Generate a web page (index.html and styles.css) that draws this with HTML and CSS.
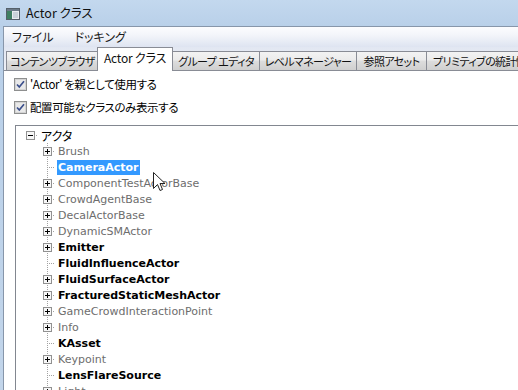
FILE: index.html
```html
<!DOCTYPE html>
<html lang="ja">
<head>
<meta charset="utf-8">
<title>Actor クラス</title>
<link rel="stylesheet" href="styles.css">
</head>
<body>
<div class="window">
  <div class="titlebar">
    <svg class="appicon" width="14" height="12" viewBox="0 0 14 12">
      <rect x="0.5" y="0.5" width="13" height="11" fill="#e8ecef" stroke="#55606a"/>
      <rect x="1" y="1" width="12" height="2" fill="#6b7a88"/>
      <rect x="1" y="3" width="5" height="8" fill="#3f7f62"/>
      <rect x="7" y="4" width="5" height="6" fill="#c9d2d9"/>
    </svg>
    <span class="title">Actor クラス</span>
  </div>
  <div class="client">
    <div class="menubar">
      <span class="menu">ファイル</span>
      <span class="menu">ドッキング</span>
    </div>
    <div class="tabbar">
      <div class="tab t1">コンテンツブラウザ</div>
      <div class="tab active t2">Actor クラス</div>
      <div class="tab t3">グループ エディタ</div>
      <div class="tab t4">レベルマネージャー</div>
      <div class="tab t5">参照アセット</div>
      <div class="tab t6">プリミティブの統計情報</div>
    </div>
    <div class="panel">
      <div class="check first">
        <svg class="cbox" width="13" height="13" viewBox="0 0 13 13">
          <rect x="0.5" y="0.5" width="12" height="12" fill="#f6f6f6" stroke="#8e8f8f"/>
          <rect x="1.5" y="1.5" width="10" height="10" fill="#e9e9e9" stroke="#d4d4d4"/>
          <path d="M3 6.5 L5.3 9 L10 3.3" fill="none" stroke="#3b4f8c" stroke-width="1.7"/>
        </svg>
        <span class="jp cl">'Actor' を親として使用する</span>
      </div>
      <div class="check second">
        <svg class="cbox" width="13" height="13" viewBox="0 0 13 13">
          <rect x="0.5" y="0.5" width="12" height="12" fill="#f6f6f6" stroke="#8e8f8f"/>
          <rect x="1.5" y="1.5" width="10" height="10" fill="#e9e9e9" stroke="#d4d4d4"/>
          <path d="M3 6.5 L5.3 9 L10 3.3" fill="none" stroke="#3b4f8c" stroke-width="1.7"/>
        </svg>
        <span class="jp cl">配置可能なクラスのみ表示する</span>
      </div>
      <div class="tree">
        <div class="row root">
          <span class="conn rootconn"><svg class="exp" width="9" height="9" viewBox="0 0 9 9"><rect x="0.5" y="0.5" width="8" height="8" fill="#f7f7f7" stroke="#919191"/><path d="M2 4.5h5" stroke="#000"/></svg></span>
          <span class="label jp">アクタ</span>
        </div>
        <div class="row child">
          <span class="conn"><svg class="exp" width="9" height="9" viewBox="0 0 9 9"><rect x="0.5" y="0.5" width="8" height="8" fill="#f7f7f7" stroke="#919191"/><path d="M2 4.5h5M4.5 2v5" stroke="#000"/></svg></span>
          <span class="label dim">Brush</span>
        </div>
        <div class="row child">
          <span class="conn leaf"></span>
          <span class="label strong selected">CameraActor</span>
        </div>
        <div class="row child">
          <span class="conn"><svg class="exp" width="9" height="9" viewBox="0 0 9 9"><rect x="0.5" y="0.5" width="8" height="8" fill="#f7f7f7" stroke="#919191"/><path d="M2 4.5h5M4.5 2v5" stroke="#000"/></svg></span>
          <span class="label dim">ComponentTestActorBase</span>
        </div>
        <div class="row child">
          <span class="conn"><svg class="exp" width="9" height="9" viewBox="0 0 9 9"><rect x="0.5" y="0.5" width="8" height="8" fill="#f7f7f7" stroke="#919191"/><path d="M2 4.5h5M4.5 2v5" stroke="#000"/></svg></span>
          <span class="label dim">CrowdAgentBase</span>
        </div>
        <div class="row child">
          <span class="conn"><svg class="exp" width="9" height="9" viewBox="0 0 9 9"><rect x="0.5" y="0.5" width="8" height="8" fill="#f7f7f7" stroke="#919191"/><path d="M2 4.5h5M4.5 2v5" stroke="#000"/></svg></span>
          <span class="label dim">DecalActorBase</span>
        </div>
        <div class="row child">
          <span class="conn"><svg class="exp" width="9" height="9" viewBox="0 0 9 9"><rect x="0.5" y="0.5" width="8" height="8" fill="#f7f7f7" stroke="#919191"/><path d="M2 4.5h5M4.5 2v5" stroke="#000"/></svg></span>
          <span class="label dim">DynamicSMActor</span>
        </div>
        <div class="row child">
          <span class="conn"><svg class="exp" width="9" height="9" viewBox="0 0 9 9"><rect x="0.5" y="0.5" width="8" height="8" fill="#f7f7f7" stroke="#919191"/><path d="M2 4.5h5M4.5 2v5" stroke="#000"/></svg></span>
          <span class="label strong">Emitter</span>
        </div>
        <div class="row child">
          <span class="conn leaf"></span>
          <span class="label strong">FluidInfluenceActor</span>
        </div>
        <div class="row child">
          <span class="conn"><svg class="exp" width="9" height="9" viewBox="0 0 9 9"><rect x="0.5" y="0.5" width="8" height="8" fill="#f7f7f7" stroke="#919191"/><path d="M2 4.5h5M4.5 2v5" stroke="#000"/></svg></span>
          <span class="label strong">FluidSurfaceActor</span>
        </div>
        <div class="row child">
          <span class="conn"><svg class="exp" width="9" height="9" viewBox="0 0 9 9"><rect x="0.5" y="0.5" width="8" height="8" fill="#f7f7f7" stroke="#919191"/><path d="M2 4.5h5M4.5 2v5" stroke="#000"/></svg></span>
          <span class="label strong">FracturedStaticMeshActor</span>
        </div>
        <div class="row child">
          <span class="conn"><svg class="exp" width="9" height="9" viewBox="0 0 9 9"><rect x="0.5" y="0.5" width="8" height="8" fill="#f7f7f7" stroke="#919191"/><path d="M2 4.5h5M4.5 2v5" stroke="#000"/></svg></span>
          <span class="label dim">GameCrowdInteractionPoint</span>
        </div>
        <div class="row child">
          <span class="conn"><svg class="exp" width="9" height="9" viewBox="0 0 9 9"><rect x="0.5" y="0.5" width="8" height="8" fill="#f7f7f7" stroke="#919191"/><path d="M2 4.5h5M4.5 2v5" stroke="#000"/></svg></span>
          <span class="label dim">Info</span>
        </div>
        <div class="row child">
          <span class="conn leaf"></span>
          <span class="label strong">KAsset</span>
        </div>
        <div class="row child">
          <span class="conn"><svg class="exp" width="9" height="9" viewBox="0 0 9 9"><rect x="0.5" y="0.5" width="8" height="8" fill="#f7f7f7" stroke="#919191"/><path d="M2 4.5h5M4.5 2v5" stroke="#000"/></svg></span>
          <span class="label dim">Keypoint</span>
        </div>
        <div class="row child">
          <span class="conn leaf"></span>
          <span class="label strong">LensFlareSource</span>
        </div>
        <div class="row child">
          <span class="conn"><svg class="exp" width="9" height="9" viewBox="0 0 9 9"><rect x="0.5" y="0.5" width="8" height="8" fill="#f7f7f7" stroke="#919191"/><path d="M2 4.5h5M4.5 2v5" stroke="#000"/></svg></span>
          <span class="label dim">Light</span>
        </div>
      </div>
    </div>
  </div>
  <svg class="cursor" width="13" height="21" viewBox="0 0 13 21">
    <path d="M0.5 0.5 L0.5 16.5 L4.5 12.5 L7 18.5 L9.5 17.5 L7 11.5 L12 11.5 Z" fill="#fff" stroke="#222" stroke-width="1" stroke-linejoin="miter"/>
  </svg>
</div>
</body>
</html>
```
FILE: styles.css
```css
html, body {
  margin: 0;
  padding: 0;
}
body {
  width: 518px;
  height: 390px;
  overflow: hidden;
  background: #c0d5eb;
  font-family: "Noto Sans CJK JP", "Noto Sans", sans-serif;
  font-size: 12px;
  color: #000;
}
.window {
  position: relative;
  width: 518px;
  height: 390px;
  display: flex;
  flex-direction: column;
  overflow: hidden;
  background: linear-gradient(to bottom, #c3d8ee 0, #b9d0e9 26px, #c2d5ea 100%);
}
.jp {
  font-family: "Noto Sans CJK JP", sans-serif;
  font-feature-settings: "palt";
}

/* title bar */
.titlebar {
  height: 26px;
  flex-shrink: 0;
  display: flex;
  align-items: center;
  padding-left: 6px;
  box-sizing: border-box;
}
.appicon {
  display: block;
  margin-top: 2px;
}
.title {
  margin-left: 6px;
  font-size: 12.5px;
  font-feature-settings: "palt";
  color: #111;
  line-height: 16px;
}

/* client area */
.client {
  flex: 1;
  margin-left: 3px;
  border-left: 1px solid #8796aa;
  border-top: 1px solid #8796aa;
  background: #fff;
  display: flex;
  flex-direction: column;
  min-height: 0;
  overflow: hidden;
}
.menubar {
  height: 20px;
  flex-shrink: 0;
  display: flex;
  align-items: center;
  gap: 21px;
  padding-left: 8px;
  background: linear-gradient(to bottom, #fcfcfe 0, #f3f5fa 40%, #dee4f1 100%);
  font-feature-settings: "palt";
}
.menu {
  line-height: 16px;
  color: #1a1a1a;
}

/* tabs */
.tabbar {
  height: 23px;
  flex-shrink: 0;
  display: flex;
  align-items: flex-end;
  padding-left: 2px;
  background: linear-gradient(to bottom, #e2e7f2 0, #eef0f6 100%);
  font-feature-settings: "palt";
  font-size: 11px;
  letter-spacing: -0.6px;
}
.tab {
  box-sizing: border-box;
  height: 19px;
  border: 1px solid #898c95;
  border-bottom: none;
  border-right: none;
  background: linear-gradient(to bottom, #f3f3f3 0, #ebebeb 45%, #dddddd 50%, #cfcfcf 100%);
  display: flex;
  align-items: center;
  justify-content: center;
  white-space: nowrap;
  line-height: 14px;
  color: #111;
  flex-shrink: 0;
  overflow: hidden;
}
.tab.active {
  position: relative;
  z-index: 1;
  height: 24px;
  margin-bottom: -1px;
  margin-left: -1px;
  margin-right: -1px;
  border-right: 1px solid #898c95;
  background: #fff;
  padding-bottom: 4px;
  font-size: 12px;
  letter-spacing: -0.2px;
}
.t1 { width: 92px; }
.t2 { width: 76px; }
.t3 { width: 87px; }
.t4 { width: 97px; }
.t5 { width: 70px; }
.t6 { width: 94px; justify-content: flex-start; padding-left: 6px; }

/* panel */
.panel {
  flex: 1;
  border-top: 1px solid #898c95;
  padding-left: 10px;
  min-height: 0;
  overflow: hidden;
}
.check {
  height: 18px;
  display: flex;
  align-items: center;
  gap: 3px;
}
.check.first { margin-top: 4px; }
.check.second { margin-top: 5px; }
.cbox { display: block; flex-shrink: 0; }
.cl {
  font-size: 11.5px;
  letter-spacing: -0.4px;
  white-space: nowrap;
}

/* tree */
.tree {
  margin-top: 9px;
  margin-left: 1px;
  border-top: 1px solid #828790;
  border-left: 1px solid #828790;
  padding-top: 1px;
}
.row {
  height: 16px;
  display: flex;
  align-items: center;
}
.row.root { padding-left: 6px; }
.row.child { padding-left: 23px; }
.conn {
  width: 16px;
  height: 16px;
  flex-shrink: 0;
  box-sizing: border-box;
  padding: 4px 0 0 4px;
  background-image:
    repeating-linear-gradient(to bottom, #a2a2a2 0 1px, transparent 1px 2px),
    repeating-linear-gradient(to right, #a2a2a2 0 1px, transparent 1px 2px);
  background-size: 1px 16px, 8px 1px;
  background-position: 8px 0, 8px 8px;
  background-repeat: no-repeat;
}
.conn.rootconn {
  background-image: repeating-linear-gradient(to right, #a2a2a2 0 1px, transparent 1px 2px);
  background-size: 8px 1px;
  background-position: 8px 8px;
}
.exp { display: block; }
.label {
  margin-left: 2px;
  padding: 0 1px;
  height: 15px;
  line-height: 15px;
  white-space: nowrap;
  font-family: "DejaVu Sans", Verdana, sans-serif;
  font-size: 11px;
}
.label.jp {
  font-family: "Noto Sans CJK JP", sans-serif;
  font-size: 12px;
  color: #000;
}
.label.dim { color: #6d6d6d; }
.label.strong { font-weight: bold; color: #000; }
.label.selected {
  background: #3399ff;
  color: #fff;
}

/* mouse pointer overlay */
.cursor {
  position: absolute;
  left: 153px;
  top: 172px;
  z-index: 5;
}
```
